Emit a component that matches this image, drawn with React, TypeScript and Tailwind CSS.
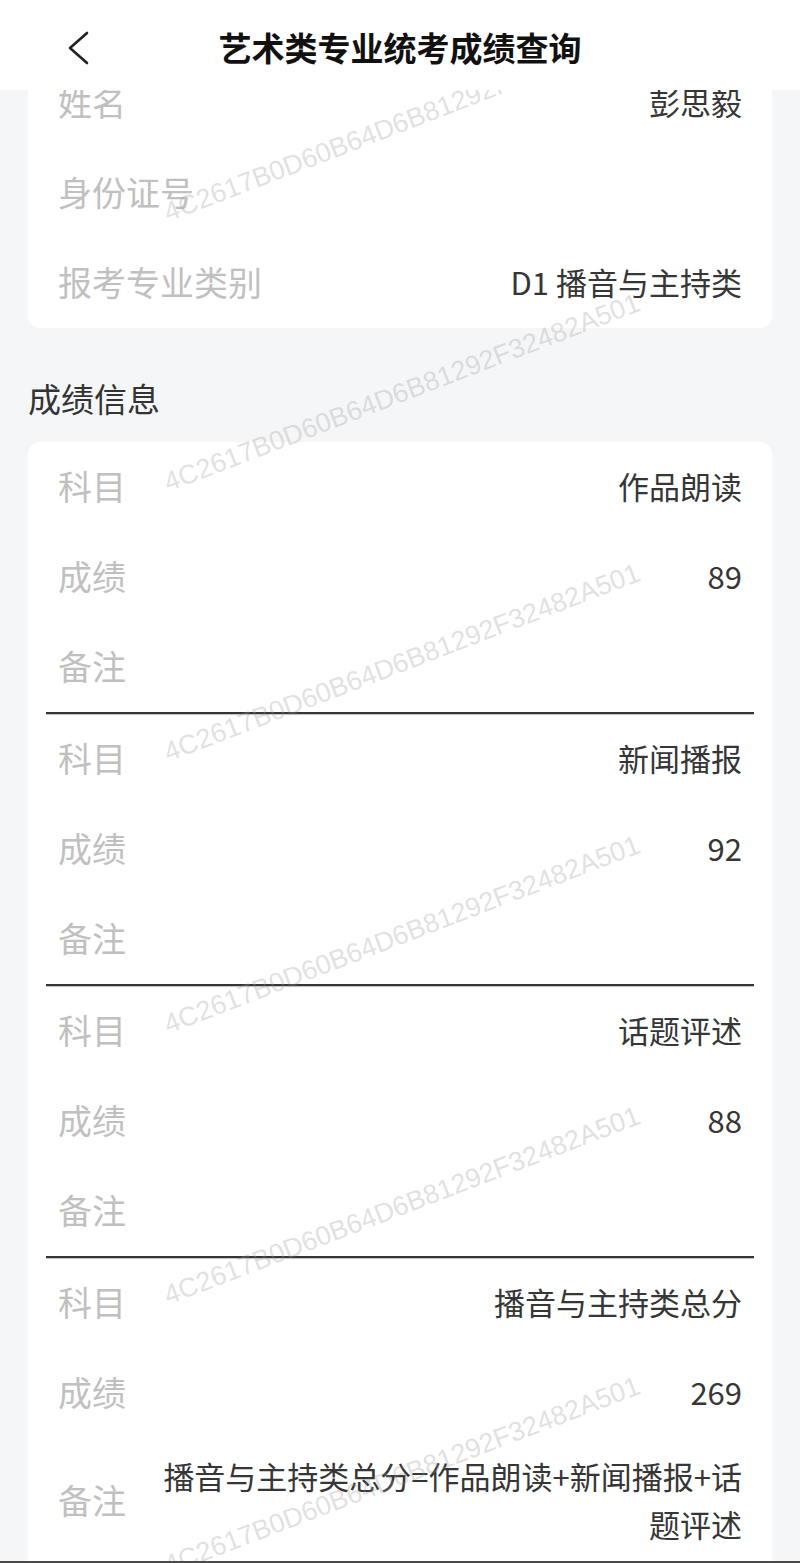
import React from "react";

const WM = "4C2617B0D60B64D6B81292F32482A501";

const wmPositions = [
  "top-[123px]",
  "top-[393px]",
  "top-[663px]",
  "top-[935px]",
  "top-[1206px]",
  "top-[1476px]",
];

function Row({ label, value }: { label: string; value?: string }) {
  return (
    <div className="flex h-[90px] items-center justify-between px-[30px] pb-[3px]">
      <span className="text-[34px] leading-none text-[#c0c0c0]">{label}</span>
      <span className="text-[31px] leading-none text-[#363636]">{value ?? ""}</span>
    </div>
  );
}

function Divider() {
  return <div className="mx-[18px] h-[2px] bg-[#363636] shadow-[0_1px_1px_rgba(0,0,0,0.25)]" />;
}

const groups = [
  { subject: "作品朗读", score: "89" },
  { subject: "新闻播报", score: "92" },
  { subject: "话题评述", score: "88" },
];

export default function App() {
  return (
    <div className="relative h-[1563px] overflow-hidden border-b-2 border-[#4a4a4a] bg-[#f5f6f8] font-['Noto_Sans_CJK_SC','Noto_Sans',sans-serif]">
      {/* header */}
      <header className="relative z-20 grid h-[90px] grid-cols-[120px_1fr_120px] items-center bg-white pt-[5px]">
        <div className="pl-[66px]">
          <svg width="26" height="36" viewBox="0 0 26 36" fill="none">
            <polyline
              points="21,3 4,18 21,33"
              stroke="#222"
              strokeWidth="2.6"
              strokeLinecap="round"
              strokeLinejoin="round"
            />
          </svg>
        </div>
        <h1 className="text-center text-[33px] font-bold leading-none text-[#111]">艺术类专业统考成绩查询</h1>
        <div />
      </header>

      <main className="px-[28px]">
        {/* personal info card */}
        <section className="-mt-[32px] rounded-[12px] bg-white">
          <Row label="姓名" value="彭思毅" />
          <Row label="身份证号" />
          <Row label="报考专业类别" value="D1 播音与主持类" />
        </section>

        <h2 className="mb-[20px] mt-[46px] h-[48px] text-[33px] font-normal leading-[48px] text-[#333]">成绩信息</h2>

        {/* score card */}
        <section className="rounded-[12px] bg-white">
          {groups.map((g) => (
            <div key={g.subject}>
              <Row label="科目" value={g.subject} />
              <Row label="成绩" value={g.score} />
              <Row label="备注" />
              <Divider />
            </div>
          ))}
          <Row label="科目" value="播音与主持类总分" />
          <Row label="成绩" value="269" />
          <div className="flex items-center justify-between px-[30px] pb-[21px] pt-[14px]">
            <span className="shrink-0 text-[34px] leading-none text-[#c0c0c0]">备注</span>
            <span className="max-w-[590px] text-right text-[31px] leading-[48px] text-[#363636]">
              播音与主持类总分=作品朗读+新闻播报+话题评述
            </span>
          </div>
        </section>
      </main>

      {/* watermark overlay */}
      <div className="pointer-events-none absolute inset-0 z-10">
        {wmPositions.map((p) => (
          <span
            key={p}
            className={`absolute left-[402px] ${p} -translate-x-1/2 -translate-y-1/2 -rotate-[21deg] whitespace-nowrap font-['Liberation_Sans',sans-serif] text-[27px] leading-none text-[rgba(150,150,150,0.3)]`}
          >
            {WM}
          </span>
        ))}
      </div>
    </div>
  );
}
